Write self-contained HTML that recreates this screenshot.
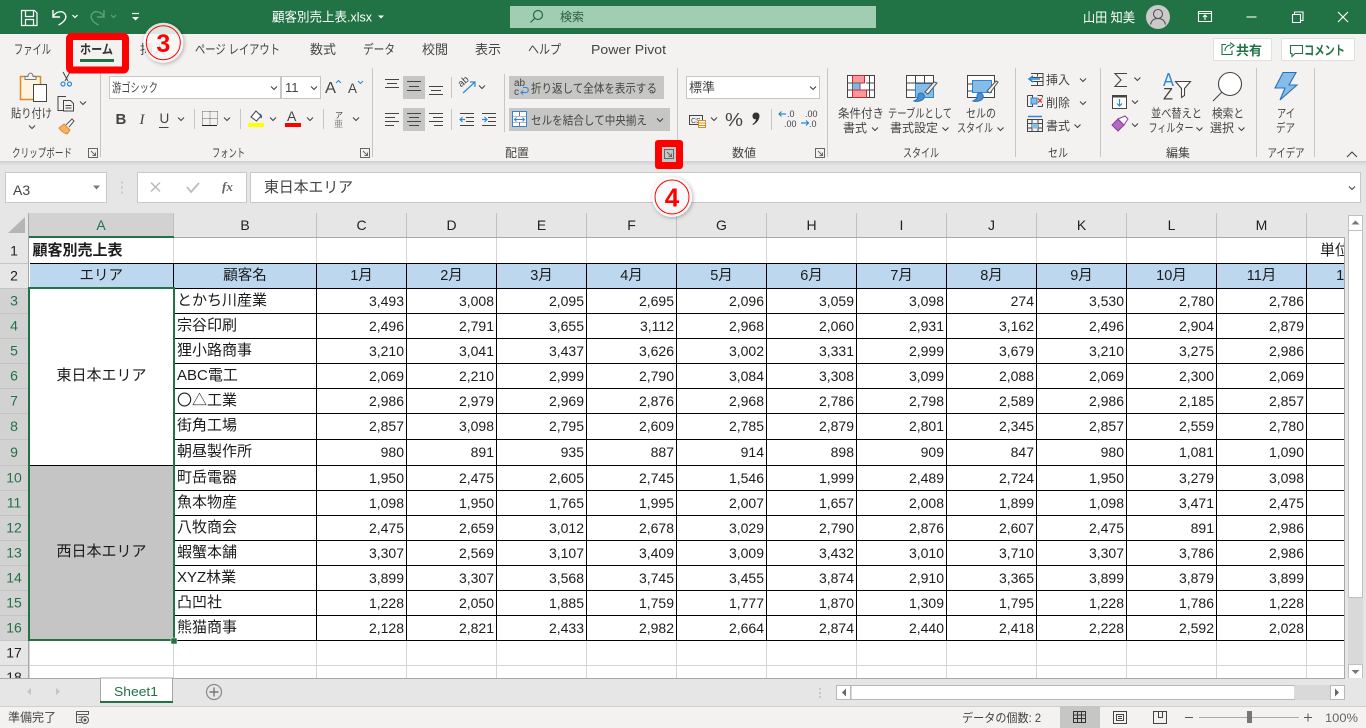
<!DOCTYPE html>
<html lang="ja">
<head>
<meta charset="utf-8">
<title>顧客別売上表</title>
<style>
html,body{margin:0;padding:0;width:1366px;height:728px;overflow:hidden;background:#e6e6e6;font-family:"Liberation Sans","Noto Sans CJK JP",sans-serif}
#wrap{position:absolute;left:29px;top:237px;width:1315px;height:441px;overflow:hidden;background:#fff}
table{border-collapse:collapse;table-layout:fixed;width:1367px;position:absolute;left:0;top:0}
col.a{width:144px}col.b{width:143px}col.n{width:90px}
tr{height:25px}
tr.h{height:26px}
td{padding:0 2px 0 0;border:1px solid #000;font-size:14px;text-align:right;color:#1c1c1c;line-height:18px;overflow:hidden;white-space:nowrap;vertical-align:middle}
td.t{text-align:left;font-size:15px;padding-left:3px}
td.c{text-align:center;font-size:15px;padding:0 0 2px 0}
tr.hd td{background:#bdd7ee;text-align:center;padding:0;font-size:14.500px}
tr.g td{border:1px solid #d4d4d4}
tr.b1 td{border-bottom:1px solid #000}
tr.b1 td.t{padding-top:3px}
td.w{background:#fff}
td.k{background:#c5c5c5}
svg{position:absolute;left:0;top:0}
svg text{font-family:"Liberation Sans","Noto Sans CJK JP",sans-serif;fill:#444;font-size:12px}
</style>
</head>
<body>
<div id="wrap">
<table>
<colgroup><col class="a"><col class="b"><col class="n"><col class="n"><col class="n"><col class="n"><col class="n"><col class="n"><col class="n"><col class="n"><col class="n"><col class="n"><col class="n"><col class="n"></colgroup>
<tr class="g h b1"><td class="t" style="font-weight:bold;border-left:0;border-top:0">顧客別売上表</td><td style="border-top:0"></td><td style="border-top:0"></td><td style="border-top:0"></td><td style="border-top:0"></td><td style="border-top:0"></td><td style="border-top:0"></td><td style="border-top:0"></td><td style="border-top:0"></td><td style="border-top:0"></td><td style="border-top:0"></td><td style="border-top:0"></td><td style="border-top:0"></td><td class="t" style="border-top:0;padding-left:13px">単位：千円</td></tr>
<tr class="hd"><td style="border-left:0">エリア</td><td>顧客名</td><td>1月</td><td>2月</td><td>3月</td><td>4月</td><td>5月</td><td>6月</td><td>7月</td><td>8月</td><td>9月</td><td>10月</td><td>11月</td><td>12月</td></tr>
<tr><td class="c w" rowspan="7">東日本エリア</td><td class="t">とかち川産業</td><td>3,493</td><td>3,008</td><td>2,095</td><td>2,695</td><td>2,096</td><td>3,059</td><td>3,098</td><td>274</td><td>3,530</td><td>2,780</td><td>2,786</td><td></td></tr>
<tr><td class="t">宗谷印刷</td><td>2,496</td><td>2,791</td><td>3,655</td><td>3,112</td><td>2,968</td><td>2,060</td><td>2,931</td><td>3,162</td><td>2,496</td><td>2,904</td><td>2,879</td><td></td></tr>
<tr><td class="t">狸小路商事</td><td>3,210</td><td>3,041</td><td>3,437</td><td>3,626</td><td>3,002</td><td>3,331</td><td>2,999</td><td>3,679</td><td>3,210</td><td>3,275</td><td>2,986</td><td></td></tr>
<tr><td class="t">ABC電工</td><td>2,069</td><td>2,210</td><td>2,999</td><td>2,790</td><td>3,084</td><td>3,308</td><td>3,099</td><td>2,088</td><td>2,069</td><td>2,300</td><td>2,069</td><td></td></tr>
<tr><td class="t">〇△工業</td><td>2,986</td><td>2,979</td><td>2,969</td><td>2,876</td><td>2,968</td><td>2,786</td><td>2,798</td><td>2,589</td><td>2,986</td><td>2,185</td><td>2,857</td><td></td></tr>
<tr class="h"><td class="t">街角工場</td><td>2,857</td><td>3,098</td><td>2,795</td><td>2,609</td><td>2,785</td><td>2,879</td><td>2,801</td><td>2,345</td><td>2,857</td><td>2,559</td><td>2,780</td><td></td></tr>
<tr class="h"><td class="t">朝昼製作所</td><td>980</td><td>891</td><td>935</td><td>887</td><td>914</td><td>898</td><td>909</td><td>847</td><td>980</td><td>1,081</td><td>1,090</td><td></td></tr>
<tr><td class="c k" rowspan="7">西日本エリア</td><td class="t">町岳電器</td><td>1,950</td><td>2,475</td><td>2,605</td><td>2,745</td><td>1,546</td><td>1,999</td><td>2,489</td><td>2,724</td><td>1,950</td><td>3,279</td><td>3,098</td><td></td></tr>
<tr><td class="t">魚本物産</td><td>1,098</td><td>1,950</td><td>1,765</td><td>1,995</td><td>2,007</td><td>1,657</td><td>2,008</td><td>1,899</td><td>1,098</td><td>3,471</td><td>2,475</td><td></td></tr>
<tr><td class="t">八牧商会</td><td>2,475</td><td>2,659</td><td>3,012</td><td>2,678</td><td>3,029</td><td>2,790</td><td>2,876</td><td>2,607</td><td>2,475</td><td>891</td><td>2,986</td><td></td></tr>
<tr><td class="t">蝦蟹本舗</td><td>3,307</td><td>2,569</td><td>3,107</td><td>3,409</td><td>3,009</td><td>3,432</td><td>3,010</td><td>3,710</td><td>3,307</td><td>3,786</td><td>2,986</td><td></td></tr>
<tr><td class="t">XYZ林業</td><td>3,899</td><td>3,307</td><td>3,568</td><td>3,745</td><td>3,455</td><td>3,874</td><td>2,910</td><td>3,365</td><td>3,899</td><td>3,879</td><td>3,899</td><td></td></tr>
<tr><td class="t">凸凹社</td><td>1,228</td><td>2,050</td><td>1,885</td><td>1,759</td><td>1,777</td><td>1,870</td><td>1,309</td><td>1,795</td><td>1,228</td><td>1,786</td><td>1,228</td><td></td></tr>
<tr><td class="t">熊猫商事</td><td>2,128</td><td>2,821</td><td>2,433</td><td>2,982</td><td>2,664</td><td>2,874</td><td>2,440</td><td>2,418</td><td>2,228</td><td>2,592</td><td>2,028</td><td></td></tr>
<tr class="g"><td></td><td></td><td></td><td></td><td></td><td></td><td></td><td></td><td></td><td></td><td></td><td></td><td></td><td></td></tr>
<tr class="g"><td></td><td></td><td></td><td></td><td></td><td></td><td></td><td></td><td></td><td></td><td></td><td></td><td></td><td></td></tr>
</table>
</div>

<svg width="1366" height="728" viewBox="0 0 1366 728">
<defs>
<path id="c" d="M-3-1.500 0 1.500 3-1.500" fill="none" stroke="#444" stroke-width="1.100"/>
<g id="l" fill="none" stroke="#666"><path d="M-4.500 4.500v-9h9v9z"/><path d="M-2 -2 2 2M2.500-.5v3h-3"/></g>
<filter id="sh" x="-30%" y="-30%" width="160%" height="160%"><feDropShadow dx="1" dy="1" stdDeviation="2" flood-color="#000" flood-opacity=".35"/></filter>
<linearGradient id="rs" x1="0" y1="0" x2="0" y2="1"><stop offset="0" stop-color="#cfcfcf"/><stop offset="1" stop-color="#e6e6e6"/></linearGradient>
</defs>

<!-- title bar -->
<rect width="1366" height="34" fill="#217346"/>
<g fill="none" stroke="#fff" stroke-width="1.200">
<path d="M21.500 10.500h13l2.500 2.500v12.500h-15.500z"/><path d="M25.500 10.500v6h8v-6M25.500 25.500v-6h8v6"/>
<path d="M53 10v7h7" stroke-width="1.400"/><path d="M53 16.500c3-5 9-6.500 12-2.500c2.500 3.500-.5 8-6.500 11" stroke-width="1.400"/>
<path d="M72.500 15l2.500 2.500 2.500-2.500"/>
<g stroke="#5f9f7d"><path d="M104 10v7h-7" stroke-width="1.400"/><path d="M104 16.500c-3-5-9-6.500-12-2.500c-2.500 3.500.5 8 6.500 11" stroke-width="1.400"/><path d="M111 15l2.500 2.500 2.500-2.500"/></g>
<path d="M132 13.500h7"/>
</g>
<path d="M132 17h7l-3.500 3.500z" fill="#fff"/>
<text x="272" y="21.500" textLength="100" lengthAdjust="spacingAndGlyphs" style="fill:#fff;font-size:13px">顧客別売上表.xlsx</text>
<path d="M378 15.500h6l-3 3z" fill="#fff"/>
<rect x="510" y="6" width="366" height="22" fill="#a1cdb3"/>
<g fill="none" stroke="#1f6b42" stroke-width="1.200"><circle cx="538" cy="15" r="4.500"/><path d="M534.500 18.500l-4 4"/></g>
<text x="560" y="21" style="fill:#275f40;font-size:12px">検索</text>
<text x="1083" y="22" textLength="52" lengthAdjust="spacingAndGlyphs" style="fill:#fff;font-size:13px">山田 知美</text>
<circle cx="1158" cy="17" r="12" fill="#cacaca"/>
<g fill="none" stroke="#555" stroke-width="1.100"><circle cx="1158" cy="14" r="4.500"/><path d="M1150.500 24.500c1-4.500 4-6 7.500-6s6.500 1.500 7.500 6"/></g>
<g fill="none" stroke="#fff" stroke-width="1.100">
<path d="M1198.500 11.500h13v10h-13zM1198.500 13.500h13"/><path d="M1205 20v-5M1203 17l2-2 2 2"/>
<path d="M1246.500 17h10"/>
<path d="M1292.500 14.500h8v8h-8zM1294.500 14.500v-2.500h8.500v8.500h-2.500"/>
<path d="M1338 12l10 10M1348 12l-10 10" stroke-width="1.200"/>
</g>

<!-- ribbon -->
<rect y="34" width="1366" height="127" fill="#f3f2f1"/>
<rect y="161" width="1366" height="5" fill="url(#rs)"/>
<g>
<text x="14" y="54" textLength="37" lengthAdjust="spacingAndGlyphs" style="font-size:13px">ファイル</text>
<text x="140" y="54" textLength="26" style="font-size:13px">挿入</text>
<text x="195" y="54" textLength="85" lengthAdjust="spacingAndGlyphs" style="font-size:13px">ページ レイアウト</text>
<text x="310" y="54" textLength="26" style="font-size:13px">数式</text>
<text x="363" y="54" textLength="32" lengthAdjust="spacingAndGlyphs" style="font-size:13px">データ</text>
<text x="422" y="54" textLength="26" style="font-size:13px">校閲</text>
<text x="475" y="54" textLength="26" style="font-size:13px">表示</text>
<text x="528" y="54" textLength="33" lengthAdjust="spacingAndGlyphs" style="font-size:13px">ヘルプ</text>
<text x="591" y="54" textLength="75" lengthAdjust="spacingAndGlyphs" style="font-size:13px">Power Pivot</text>
<text x="80" y="54" textLength="33" lengthAdjust="spacingAndGlyphs" style="font-size:13px;font-weight:bold;fill:#333">ホーム</text>
</g>
<rect x="80" y="59" width="34" height="3" fill="#217346"/>
<!-- share/comment -->
<rect x="1213.500" y="38.500" width="58" height="22" rx="1" fill="#fff" stroke="#e1dfdd"/>
<rect x="1281.500" y="38.500" width="73" height="22" rx="1" fill="#fff" stroke="#e1dfdd"/>
<g fill="none" stroke="#217346" stroke-width="1.100"><path d="M1226 44.500h-4v10h10v-4"/><path d="M1225 51c0-4 3-6 6-6M1230 42.500l4 3-4 3"/><path d="M1290.500 45.500h12v8h-7.500l-3 3v-3h-1.500z"/></g>
<text x="1236" y="55" style="fill:#217346;font-size:13px;font-weight:bold">共有</text>
<text x="1304" y="55" textLength="41" lengthAdjust="spacingAndGlyphs" style="fill:#217346;font-size:13px;font-weight:bold">コメント</text>

<!-- separators -->
<g stroke="#c8c6c4"><path d="M100.500 68v89M372.500 68v89M677.500 68v89M827.500 68v89M1015.500 68v89M1100.500 68v89M1256.500 68v89M1314.500 68v89"/><path d="M504.500 74v58M451.500 77v21M451.500 109v21M194.500 109v20M240.500 109v20M323.500 109v20M771.500 109v21"/></g>

<!-- clipboard -->
<rect x="20.500" y="76.500" width="20" height="23" fill="#fdf3e1" stroke="#e08a1e" stroke-width="1.500"/>
<path d="M25 79.500v-3h3c0-4.500 5-4.500 5 0h3v3z" fill="#f3f2f1" stroke="#777"/>
<rect x="33.500" y="84.500" width="13" height="17" fill="#fff" stroke="#444"/>
<text x="11" y="117.500" textLength="41" lengthAdjust="spacingAndGlyphs">貼り付け</text>
<use href="#c" x="32" y="127"/>
<g fill="none" stroke="#444"><path d="M63 72l5 9M70 72l-5 9"/></g>
<g fill="none" stroke="#2b88d8" stroke-width="1.200"><circle cx="63" cy="84" r="2"/><circle cx="69.500" cy="84" r="2"/></g>
<g fill="none" stroke="#444"><path d="M63.500 110.500h-5.500v-14h8"/><path d="M63.500 100.500h7l3 3v7.500h-10zM65.500 105.500h6M65.500 108h6"/></g>
<use href="#c" x="83" y="103"/>
<path d="M59 128l5-4 6 6-3 4c-3-1-6-3-8-6z" fill="#f6b26b" stroke="#e08a1e"/>
<path d="M66 125l6-6 2 2-5 6" fill="#fff" stroke="#555"/>
<text x="12" y="157" textLength="60" lengthAdjust="spacingAndGlyphs">クリップボード</text>
<use href="#l" x="93" y="153"/>

<!-- font -->
<rect x="109.500" y="76.500" width="171" height="22" fill="#fff" stroke="#c8c6c4"/>
<rect x="281.500" y="76.500" width="39" height="22" fill="#fff" stroke="#c8c6c4"/>
<text x="112" y="92" textLength="46" lengthAdjust="spacingAndGlyphs" style="font-size:12.500px">游ゴシック</text>
<text x="285" y="92" style="font-size:13px">11</text>
<use href="#c" x="274" y="88"/><use href="#c" x="314" y="88"/>
<text x="325" y="93" style="font-size:16px" textLength="11" lengthAdjust="spacingAndGlyphs">A</text>
<text x="348" y="93" style="font-size:14px" textLength="9" lengthAdjust="spacingAndGlyphs">A</text>
<path d="M336 83l2.500-2.500 2.500 2.500M358 81l2.500 2.500 2.500-2.500" fill="none" stroke="#2b88d8"/>
<text x="115.500" y="124" style="font-size:15px;font-weight:bold">B</text>
<text x="139.500" y="124" style="font-size:15px;font-style:italic;font-family:'Liberation Serif',serif">I</text>
<text x="159.500" y="123" style="font-size:13.500px">U</text>
<path d="M159 127.500h9.500" stroke="#444"/>
<use href="#c" x="181" y="119"/>
<path d="M202.500 111.500h15M202.500 118.500h15M202.500 111.500v14M210 111.500v14M217.500 111.500v14" fill="none" stroke="#666" stroke-dasharray="1 1"/>
<path d="M202 125.500h15" stroke="#222"/>
<use href="#c" x="227" y="119"/>
<path d="M251 117l5-6 5 5-4.500 5z" fill="#fff" stroke="#444"/>
<path d="M261 118c1-2 0-3-1.500-4" fill="none" stroke="#2b5fa8" stroke-width="1.500"/>
<rect x="248" y="123" width="16" height="4" fill="#ff0"/>
<use href="#c" x="273" y="119"/>
<text x="287" y="121" style="font-size:14px">A</text>
<rect x="285" y="123" width="16" height="4" fill="#f00"/>
<use href="#c" x="310" y="119"/>
<text x="335" y="118" style="font-size:8px">ア</text>
<text x="334" y="127" style="font-size:9px;fill:#888">亜</text>
<use href="#c" x="356" y="119"/>
<text x="212" y="157" textLength="33" lengthAdjust="spacingAndGlyphs">フォント</text>
<use href="#l" x="365" y="153"/>

<!-- alignment -->
<rect x="403" y="76" width="22" height="23" fill="#c6c6c4"/>
<rect x="403" y="108" width="22" height="23" fill="#c6c6c4"/>
<g stroke="#444" fill="none">
<path d="M385 79.500h14M387 83.500h10M385 87.500h14"/>
<path d="M407 81.500h14M409 86.500h10M407 90.500h14" />
<path d="M429 86.500h14M431 90.500h10M429 94.500h14"/>
<path d="M385 113.500h14M385 117.500h10M385 121.500h14M385 125.500h9"/>
<path d="M407 113.500h14M409 117.500h10M407 121.500h14M409 125.500h10"/>
<path d="M429 113.500h14M433 117.500h10M429 121.500h14M434 125.500h9"/>
<path d="M460 113.500h14M466 117.500h8M466 121.500h8M460 125.500h14"/>
<path d="M482 113.500h14M488 117.500h8M488 121.500h8M482 125.500h14"/>
</g>
<g fill="none" stroke="#2b88d8" stroke-width="1.200"><path d="M465 119.500h-5M462.500 117l-2.500 2.500 2.500 2.500"/><path d="M482 119.500h5M484.500 117l2.500 2.500-2.500 2.500"/><path d="M463 93l12-11M470 82h5v5"/></g>
<text x="459" y="86" transform="rotate(-40 462 84)" style="font-size:10px">ab</text>
<use href="#c" x="482" y="87"/>
<rect x="509" y="76" width="155" height="23" fill="#c6c6c4"/>
<rect x="509" y="108" width="161" height="23" fill="#c6c6c4"/>
<text x="514" y="86" style="font-size:10px">ab</text><text x="514" y="95" style="font-size:10px">c</text>
<path d="M521 92.500h5c3 0 3-5 0-5h-3M523 90.500l-2 2 2 2" fill="none" stroke="#2b88d8" stroke-width="1.100"/>
<text x="531" y="92.500" textLength="126" lengthAdjust="spacingAndGlyphs">折り返して全体を表示する</text>
<rect x="512.500" y="111.500" width="14" height="15" fill="#fff" stroke="#2b88d8"/>
<path d="M512.500 116.500h14M512.500 122h14M519.500 111.500v15" stroke="#777" fill="none"/>
<rect x="513" y="116.500" width="13" height="5.500" fill="#fff"/>
<path d="M514.500 119.500h10M516.500 117.500l-2 2 2 2M522.500 117.500l2 2-2 2" fill="none" stroke="#2b88d8"/>
<text x="531" y="124.500" textLength="116" lengthAdjust="spacingAndGlyphs">セルを結合して中央揃え</text>
<use href="#c" x="660" y="120"/>
<text x="505" y="157">配置</text>

<!-- red launcher box -->
<rect x="655" y="140" width="28" height="29" rx="3" fill="#f00"/>
<rect x="662" y="147" width="14" height="15" fill="#c6c6c4"/>
<use href="#l" x="669" y="154"/>

<!-- number -->
<rect x="686.500" y="76.500" width="133" height="22" fill="#fff" stroke="#c8c6c4"/>
<text x="689" y="92" style="font-size:13px">標準</text>
<use href="#c" x="813" y="88"/>
<rect x="689.500" y="115.500" width="13" height="9" fill="none" stroke="#444"/>
<text x="691" y="123" style="font-size:7px">CS</text>
<rect x="698.500" y="120.500" width="7" height="7" fill="#fff" stroke="#e08a1e"/>
<path d="M698.500 123h7M698.500 125.500h7" stroke="#e08a1e"/>
<use href="#c" x="714" y="119"/>
<text x="725" y="126" style="font-size:18px" textLength="18" lengthAdjust="spacingAndGlyphs">%</text>
<path d="M756 112.500c2 0 3.500 1.400 3.500 3.300 0 4-3 7.500-6.500 9.200l-.6-.8c2-1.400 3.300-3 3.700-5-.2 0-.4.100-.6.100-1.800 0-3-1.200-3-3.300 0-2 1.500-3.500 3.500-3.500z" fill="#333"/>
<text x="787" y="117" style="font-size:9px">.0</text><text x="784" y="127" style="font-size:9px">.00</text>
<text x="805" y="117" style="font-size:9px">.00</text><text x="809" y="127" style="font-size:9px">.0</text>
<path d="M786 114h-7M781.500 111.500l-2.500 2.500 2.500 2.500M801 123h8M806 120.500l2.500 2.500-2.500 2.500" fill="none" stroke="#2b88d8" stroke-width="1.200"/>
<text x="732" y="157">数値</text>
<use href="#l" x="820" y="153"/>

<!-- styles -->
<g fill="none" stroke="#444">
<rect x="847.500" y="75.500" width="27" height="22" fill="#fff"/>
<rect x="852.500" y="75.500" width="12" height="7.500" fill="#f7989c" stroke="#d8232a"/>
<rect x="852.500" y="83" width="7.500" height="7" fill="#7fb7e8" stroke="#666"/>
<rect x="852.500" y="90" width="14" height="7.500" fill="#f7989c" stroke="#d8232a"/>
<path d="M847.500 83h5M847.500 90h5M866 83h9M866 90h9M869.500 75.500v22" />
</g>
<g fill="none" stroke="#444">
<rect x="906.500" y="75.500" width="27" height="22" fill="#fff"/>
<rect x="915.500" y="83.500" width="18" height="14" fill="#85bce8" stroke="#2b88d8"/>
<path d="M906.500 83h9M906.500 90h9M915.500 75.500v8M924.500 75.500v8M915.500 83h18"/>
<rect x="967.500" y="75.500" width="27" height="22" fill="#fff"/>
<rect x="972.500" y="80.500" width="19" height="12" fill="#85bce8" stroke="#2b88d8"/>
<path d="M967.500 84h5M967.500 91h5"/>
</g>
<g fill="#f3f2f1" stroke="#555">
<path d="M937 83l-3-1-9 10 3 2z"/><path d="M998 82l-2-1-9 10 3 2z"/>
</g>
<path d="M914 101c3 1 9 0 10-3 1-3-1-5-3-5-3 0-3 2-3 4 0 2-2 3-4 4zM973 101c3 1 9 0 10-3 1-3-1-5-3-5-3 0-3 2-3 4 0 2-2 3-4 4z" fill="#4a8fd0" stroke="#2b70b8"/>
<text x="838" y="117.500" textLength="46" lengthAdjust="spacingAndGlyphs">条件付き</text>
<text x="843" y="132" textLength="24">書式</text><use href="#c" x="875" y="129"/>
<text x="888" y="117.500" textLength="64" lengthAdjust="spacingAndGlyphs">テーブルとして</text>
<text x="890" y="132" textLength="48">書式設定</text><use href="#c" x="945.500" y="129"/>
<text x="966" y="117.500" textLength="30" lengthAdjust="spacingAndGlyphs">セルの</text>
<text x="957" y="132" textLength="36" lengthAdjust="spacingAndGlyphs">スタイル</text><use href="#c" x="1000.500" y="129"/>
<text x="903" y="157" textLength="36" lengthAdjust="spacingAndGlyphs">スタイル</text>

<!-- cells -->
<g fill="none" stroke="#444">
<path d="M1031 73.500h12v12h-12M1031 77.500h12M1031 81.500h12M1037.500 73.500v3M1037.500 82v3"/>
<path d="M1027.500 95.500h5v3M1027.500 106.500h5v-3M1042.500 95.500h-5M1042.500 106.500h-5M1027.500 95.500v11M1042.500 95.500v2M1042.500 104v2.500"/>
<rect x="1027.500" y="119.500" width="15" height="12"/><path d="M1027.500 123.500h15M1027.500 128h15M1032 119.500v12M1038 119.500v12"/>
</g>
<path d="M1040 79h-10M1033 76l-4 3 4 3" fill="none" stroke="#2b88d8" stroke-width="1.500"/>
<rect x="1031" y="98" width="6" height="6" fill="#85bce8" stroke="#2b88d8"/>
<path d="M1038 98.500l4 4M1042 98.500l-4 4" stroke="#e0393e" stroke-width="1.300"/>
<rect x="1032" y="123.500" width="6" height="5" fill="#85bce8"/><path d="M1028 116.500h14" stroke="#2b88d8" stroke-width="1.500"/>
<text x="1046" y="84" textLength="24">挿入</text><use href="#c" x="1083" y="80"/>
<text x="1046" y="107" textLength="24">削除</text><use href="#c" x="1083" y="103"/>
<text x="1046" y="130" textLength="24">書式</text><use href="#c" x="1077.500" y="126"/>
<text x="1048" y="157" textLength="20" lengthAdjust="spacingAndGlyphs">セル</text>

<!-- editing -->
<path d="M1127 73.500h-12l6 6.500-6 6.500h12" fill="none" stroke="#444" stroke-width="1.100"/><use href="#c" x="1137.400" y="79"/>
<rect x="1112.500" y="95.500" width="14" height="13" fill="#fff" stroke="#444"/><path d="M1112.500 96.500h14" stroke="#444" stroke-width="2"/>
<path d="M1119.500 99v7M1117 103.500l2.500 2.500 2.500-2.500" fill="none" stroke="#2b88d8" stroke-width="1.200"/><use href="#c" x="1135" y="102"/>
<path d="M1112 125l6-6 6 6-6 6z" fill="#b46ac0" stroke="#8a3a9e"/><path d="M1118 119l7-3 3 3-4 6z" fill="#fff" stroke="#8a3a9e"/><use href="#c" x="1135" y="125"/>
<text x="1163" y="86" textLength="11" lengthAdjust="spacingAndGlyphs" style="font-size:18px;fill:#2b88d8">A</text><text x="1163" y="99.500" textLength="10" lengthAdjust="spacingAndGlyphs" style="font-size:17px">Z</text>
<path d="M1175.500 81.500h15l-6 7v7l-3 2v-9z" fill="#fff" stroke="#444" stroke-width="1.100"/>
<circle cx="1230" cy="84" r="11.500" fill="#fff" stroke="#444" stroke-width="1.100"/><path d="M1222 92l-9 9" stroke="#444" stroke-width="1.100"/>
<text x="1151" y="117.500" textLength="51" lengthAdjust="spacingAndGlyphs">並べ替えと</text>
<text x="1148.500" y="132" textLength="45" lengthAdjust="spacingAndGlyphs">フィルター</text><use href="#c" x="1199.500" y="129"/>
<text x="1212" y="117.500" textLength="32" lengthAdjust="spacingAndGlyphs">検索と</text>
<text x="1210" y="132" textLength="24">選択</text><use href="#c" x="1241.500" y="129"/>
<text x="1166" y="157" textLength="24">編集</text>

<!-- ideas -->
<path d="M1283 72.500h13l-7 12.500h8l-17 15 5-12h-10z" fill="#85bce8" stroke="#2b70b8" stroke-width="1.100"/>
<text x="1277" y="117.500" textLength="18" lengthAdjust="spacingAndGlyphs">アイ</text>
<text x="1276" y="132" textLength="19" lengthAdjust="spacingAndGlyphs">デア</text>
<text x="1267.500" y="157" textLength="37" lengthAdjust="spacingAndGlyphs">アイデア</text>
<path d="M1347 157l5-5 5 5" fill="none" stroke="#444" stroke-width="1.100"/>

<!-- formula bar -->
<rect x="5.500" y="172.500" width="101" height="30" fill="#fff" stroke="#c8c8c8"/>
<text x="13" y="195" style="font-size:14px">A3</text>
<path d="M93 185.500h7l-3.500 4z" fill="#777"/>
<path d="M122 181.500v2M122 186.500v2M122 191.500v2" stroke="#aaa"/>
<rect x="137.500" y="172.500" width="109" height="30" fill="#fff" stroke="#c8c8c8"/>
<path d="M151 182.500l9 9M160 182.500l-9 9" stroke="#bbb" stroke-width="1.500"/>
<path d="M187 187l4 5 8-9" fill="none" stroke="#bbb" stroke-width="1.800"/>
<text x="222" y="191" style="font-size:13px;font-style:italic;font-weight:bold;font-family:'Liberation Serif',serif;fill:#666">fx</text>
<rect x="250.500" y="172.500" width="1110" height="30" fill="#fff" stroke="#c8c8c8"/>
<text x="264" y="192" style="font-size:15px" textLength="89">東日本エリア</text>
<use href="#c" x="1352" y="188"/>

<!-- column headers -->
<rect x="29" y="213" width="144" height="24" fill="#d2d2d2"/>
<path d="M8 233l17-16v16z" fill="#b5b5b5"/>
<g stroke="#c0c0c0"><path d="M28.500 213v24M173.500 213v24M316.500 213v24M406.500 213v24M496.500 213v24M586.500 213v24M676.500 213v24M766.500 213v24M856.500 213v24M946.500 213v24M1036.500 213v24M1126.500 213v24M1216.500 213v24M1306.500 213v24"/></g>
<path d="M173 237.500h1172" stroke="#a8a8a8"/>
<rect x="29" y="236" width="145" height="2" fill="#217346"/>
<g text-anchor="middle">
<text x="101" y="230" style="font-size:14px;fill:#217346">A</text>
<text x="245" y="230" style="font-size:14px;fill:#222">B</text>
<text x="361.500" y="230" style="font-size:14px;fill:#222">C</text>
<text x="451.500" y="230" style="font-size:14px;fill:#222">D</text>
<text x="541.500" y="230" style="font-size:14px;fill:#222">E</text>
<text x="631.500" y="230" style="font-size:14px;fill:#222">F</text>
<text x="721.500" y="230" style="font-size:14px;fill:#222">G</text>
<text x="811.500" y="230" style="font-size:14px;fill:#222">H</text>
<text x="901.500" y="230" style="font-size:14px;fill:#222">I</text>
<text x="991.500" y="230" style="font-size:14px;fill:#222">J</text>
<text x="1081.500" y="230" style="font-size:14px;fill:#222">K</text>
<text x="1171.500" y="230" style="font-size:14px;fill:#222">L</text>
<text x="1261.500" y="230" style="font-size:14px;fill:#222">M</text>
</g>

<!-- row headers -->
<rect x="0" y="237" width="29" height="441" fill="#e6e6e6"/>
<rect x="0" y="288" width="28" height="352" fill="#d2d2d2"/>
<path d="M28.500 213v465" stroke="#a8a8a8"/>
<g stroke="#c4c4c4"><path d="M0 263.500h28M0 288.500h28M0 313.500h28M0 338.500h28M0 363.500h28M0 388.500h28M0 413.500h28M0 439.500h28M0 465.500h28M0 490.500h28M0 515.500h28M0 540.500h28M0 565.500h28M0 590.500h28M0 615.500h28M0 640.500h28M0 665.500h28"/></g>
<g text-anchor="middle">
<text x="14" y="255.500" style="font-size:14px;fill:#222">1</text>
<text x="14" y="280.500" style="font-size:14px;fill:#222">2</text>
<text x="14" y="305.500" style="font-size:14px;fill:#217346">3</text>
<text x="14" y="330.500" style="font-size:14px;fill:#217346">4</text>
<text x="14" y="355.500" style="font-size:14px;fill:#217346">5</text>
<text x="14" y="380.500" style="font-size:14px;fill:#217346">6</text>
<text x="14" y="405.500" style="font-size:14px;fill:#217346">7</text>
<text x="14" y="431" style="font-size:14px;fill:#217346">8</text>
<text x="14" y="457" style="font-size:14px;fill:#217346">9</text>
<text x="14" y="482.500" style="font-size:14px;fill:#217346">10</text>
<text x="14" y="507.500" style="font-size:14px;fill:#217346">11</text>
<text x="14" y="532.500" style="font-size:14px;fill:#217346">12</text>
<text x="14" y="557.500" style="font-size:14px;fill:#217346">13</text>
<text x="14" y="582.500" style="font-size:14px;fill:#217346">14</text>
<text x="14" y="607.500" style="font-size:14px;fill:#217346">15</text>
<text x="14" y="632.500" style="font-size:14px;fill:#217346">16</text>
<text x="14" y="657.500" style="font-size:14px;fill:#222">17</text>
<text x="14" y="682" style="font-size:14px;fill:#222">18</text>
</g>

<!-- selection -->
<rect x="29" y="288" width="145" height="352" fill="none" stroke="#217346" stroke-width="2"/>
<rect x="171" y="638" width="6" height="6" fill="#217346" stroke="#fff" stroke-width=".5"/>

<!-- v scrollbar -->
<rect x="1345" y="213" width="21" height="465" fill="#e6e6e6"/>
<path d="M1344.500 237v441" stroke="#a8a8a8"/>
<rect x="1348.500" y="230.500" width="14" height="367" fill="#fff" stroke="#c0c0c0"/>
<rect x="1348" y="598" width="15" height="66" fill="#d9d9d9"/>
<rect x="1348.500" y="215.500" width="14" height="15" fill="#fff" stroke="#c0c0c0"/>
<rect x="1348.500" y="664.500" width="14" height="14" fill="#fff" stroke="#c0c0c0"/>
<path d="M1351.500 224.500h8l-4-4zM1351.500 670h8l-4 4z" fill="#777"/>

<!-- sheet bar -->
<rect y="678" width="1366" height="28" fill="#e6e6e6"/>
<path d="M0 678.500h1345" stroke="#a8a8a8"/>
<path d="M100.500 702v-24h72v24" fill="#fff" stroke="#a8a8a8"/>
<rect x="100" y="701" width="73" height="2" fill="#217346"/>
<text x="114" y="696" textLength="44" lengthAdjust="spacingAndGlyphs" style="font-size:13px;fill:#217346">Sheet1</text>
<path d="M31 688l-4 3.500 4 3.500zM56 688l4 3.500-4 3.500z" fill="#c4c4c4"/>
<circle cx="214" cy="692" r="7.500" fill="none" stroke="#8a8a8a" stroke-width="1.200"/>
<path d="M209.500 692h9M214 687.500v9" stroke="#777" stroke-width="1.400"/>
<path d="M820 688v2M820 692v2M820 696v2" stroke="#aaa"/>
<rect x="836.500" y="685.500" width="14" height="14" fill="#fff" stroke="#b8b8b8"/>
<rect x="851" y="685.500" width="444" height="14" fill="#fff" stroke="#b8b8b8"/>
<rect x="1295" y="685" width="36" height="15" fill="#d9d9d9"/>
<rect x="1330.500" y="685.500" width="14" height="14" fill="#fff" stroke="#b8b8b8"/>
<path d="M846 688.500l-4 4 4 4zM1335 688.500l4 4-4 4z" fill="#666"/>

<!-- status bar -->
<rect y="706" width="1366" height="22" fill="#f3f2f1"/>
<path d="M0 706.500h1366" stroke="#cfcfcf"/>
<text x="8" y="721.500" textLength="48">準備完了</text>
<g fill="none" stroke="#555"><path d="M76.500 711.500h12v3M76.500 711.500v11h5M76.500 714.500h12M78.500 717h4M78.500 720h3"/><circle cx="85" cy="720" r="3.500"/></g>
<circle cx="85" cy="720" r="1.500" fill="#555"/>
<text x="962" y="722" textLength="79" lengthAdjust="spacingAndGlyphs">データの個数: 2</text>
<rect x="1060" y="706" width="40" height="22" fill="#c6c6c4"/>
<g fill="none" stroke="#333"><path d="M1073.500 711.500h12v11h-12zM1073.500 715h12M1073.500 718.500h12M1077.500 711.500v11M1081.500 711.500v11"/></g>
<g fill="none" stroke="#444"><path d="M1113.500 711.500h13v12h-13zM1116.500 714.500h7v6h-7zM1118 716.500h4M1118 718.500h4"/><path d="M1153.500 711.500h13v12h-13zM1158.500 711.500v6h4v-6"/></g>
<path d="M1185 717.500h8M1304 717.500h8M1308 713.500v8" stroke="#555"/>
<path d="M1199 717.500h100" stroke="#aaa"/>
<rect x="1247" y="711" width="5" height="12" fill="#777"/>
<text x="1325" y="722" textLength="33" lengthAdjust="spacingAndGlyphs" style="fill:#666">100%</text>

<!-- red highlight -->
<rect x="69.500" y="36.500" width="56" height="33.500" rx="2" fill="none" stroke="#f00" stroke-width="7"/>

<!-- callouts -->
<circle cx="163.300" cy="42.700" r="20" fill="#fff" fill-opacity=".82" filter="url(#sh)"/>
<circle cx="163.300" cy="42.700" r="17" fill="none" stroke="#f00" stroke-width="1"/>
<text x="163.300" y="52" text-anchor="middle" style="font-size:25px;font-weight:bold;fill:#f00">3</text>
<circle cx="672" cy="197" r="20" fill="#fff" fill-opacity=".85" filter="url(#sh)"/>
<circle cx="672" cy="197" r="17" fill="none" stroke="#f00" stroke-width="1"/>
<text x="672" y="206.500" text-anchor="middle" style="font-size:26px;font-weight:bold;fill:#f00">4</text>
</svg>
</body>
</html>
